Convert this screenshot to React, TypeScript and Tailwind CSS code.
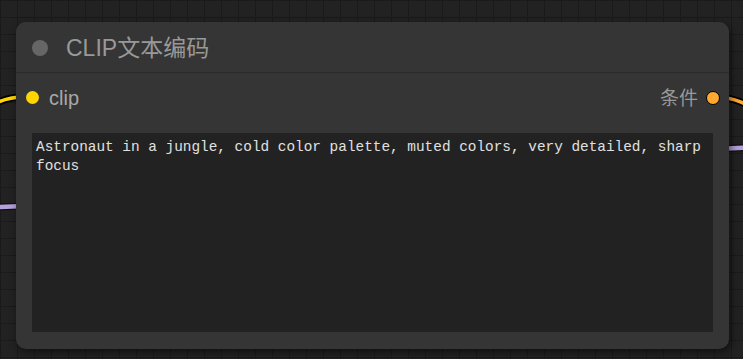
export default function App() {
  const prompt =
    'Astronaut in a jungle, cold color palette, muted colors, very detailed, sharp focus'

  return (
    <div className="relative w-[743px] h-[359px] overflow-hidden bg-[#222222] bg-[linear-gradient(#1a1a1a_1px,transparent_1px),linear-gradient(90deg,#1a1a1a_1px,transparent_1px)] bg-[length:17px_17px]">
      {/* links */}
      <svg className="absolute inset-0" width="743" height="359" viewBox="0 0 743 359" fill="none">
        <path d="M -40 128 C -12 108, -2 97, 24 97" stroke="#000" strokeWidth="7" />
        <path d="M -40 128 C -12 108, -2 97, 24 97" stroke="#ffd500" strokeWidth="3.5" />
        <path d="M 716 97 C 732 97, 742 101, 780 122" stroke="#000" strokeWidth="7" />
        <path d="M 716 97 C 732 97, 742 101, 780 122" stroke="#ffa931" strokeWidth="3.5" />
        <path d="M -20 208 L 24 206" stroke="#111" strokeWidth="7" />
        <path d="M -20 208 L 24 206" stroke="#b7a1dd" strokeWidth="4.5" />
        <path d="M 716 149 L 760 147" stroke="#111" strokeWidth="7" />
        <path d="M 716 149 L 760 147" stroke="#b7a1dd" strokeWidth="4.5" />
      </svg>

      {/* node */}
      <div className="absolute left-[16px] top-[22px] w-[713px] h-[327px] flex flex-col rounded-[10px] bg-[#353535] shadow-[2px_3px_8px_rgba(0,0,0,0.55)] font-['Liberation_Sans','Noto_Sans_CJK_SC',sans-serif]">
        <div className="h-[51px] flex items-center gap-[18px] px-4 pt-[2px] border-b border-[#2a2a2a] rounded-t-[10px] bg-[#353535]">
          <div className="w-4 h-4 rounded-full bg-[#666666]" />
          <span className="text-[23px] leading-none text-[#999999]">CLIP文本编码</span>
        </div>

        <div className="h-[49px] flex items-center justify-between pl-[10px] pr-[9px]">
          <div className="flex items-center gap-[10px]">
            <div className="w-[13px] h-[13px] rounded-full bg-[#ffd500]" />
            <span className="text-[20px] leading-none text-[#a8a8a8]">clip</span>
          </div>
          <div className="flex items-center gap-[8px] pt-[1px]">
            <span className="text-[19px] leading-none text-[#999999]">条件</span>
            <div className="w-[14px] h-[14px] rounded-full bg-[#ffa931] border-[1.5px] border-black" />
          </div>
        </div>

        <div className="flex-1 px-4 pt-[11px] pb-[17px]">
          <textarea
            readOnly
            value={prompt}
            className="w-full h-full block resize-none outline-none bg-[#222222] text-[#e0e0e0] px-1 pt-[5px] text-[14.4px] leading-[19px] font-['Liberation_Mono','Noto_Sans_CJK_SC',monospace]"
          />
        </div>
      </div>
    </div>
  )
}
